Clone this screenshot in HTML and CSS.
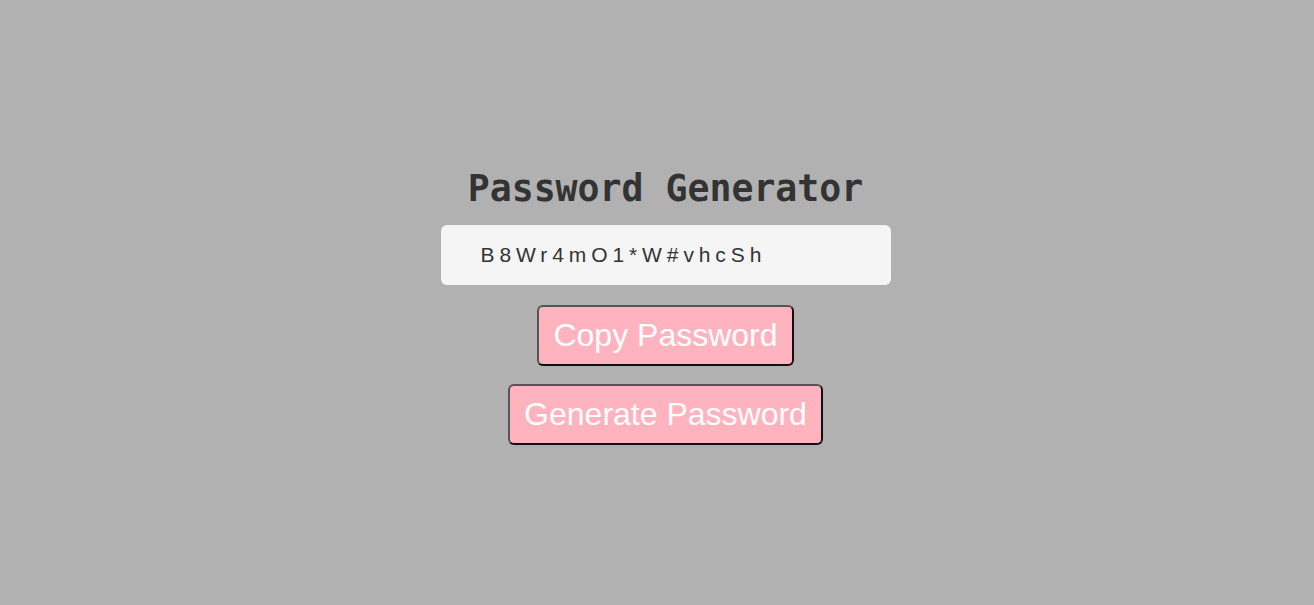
FILE: index.html
```html
<!DOCTYPE html>
<html>
<head>
<meta charset="utf-8">
<link rel="stylesheet" href="styles.css">
</head>
<body>
<main class="app">
  <h1 class="title">Password Generator</h1>
  <div class="output">B8Wr4mO1*W#vhcSh</div>
  <button class="btn btn-copy">Copy Password</button>
  <button class="btn btn-generate">Generate Password</button>
</main>
</body>
</html>
```
FILE: styles.css
```css
html, body {
  margin: 0;
  padding: 0;
  height: 100%;
}
body {
  box-sizing: border-box;
  padding: 7px 0 0 17px;
  background: #b1b1b1;
  display: flex;
  align-items: center;
  justify-content: center;
}
.app {
  display: flex;
  flex-direction: column;
  align-items: center;
}
.title {
  margin: 0 0 14px;
  font-family: "DejaVu Sans Mono", monospace;
  font-weight: bold;
  font-size: 36.5px;
  line-height: 44px;
  color: #333;
}
.output {
  box-sizing: border-box;
  width: 450px;
  height: 60px;
  padding: 0 40px;
  display: flex;
  align-items: center;
  background: #f5f5f5;
  border-radius: 6px;
  font-family: "Liberation Sans", Arial, sans-serif;
  font-size: 21px;
  letter-spacing: 4.9px;
  color: #333;
}
.btn {
  margin-top: 20px;
  padding: 10px 14.5px;
  background: #ffb3be;
  color: #fff;
  border: 2px solid;
  border-color: #555 #111 #111 #555;
  border-radius: 6px;
  font-family: "Liberation Sans", Arial, sans-serif;
  font-size: 32px;
  line-height: 37px;
  cursor: pointer;
}
.btn-generate {
  margin-top: 18px;
}
```
